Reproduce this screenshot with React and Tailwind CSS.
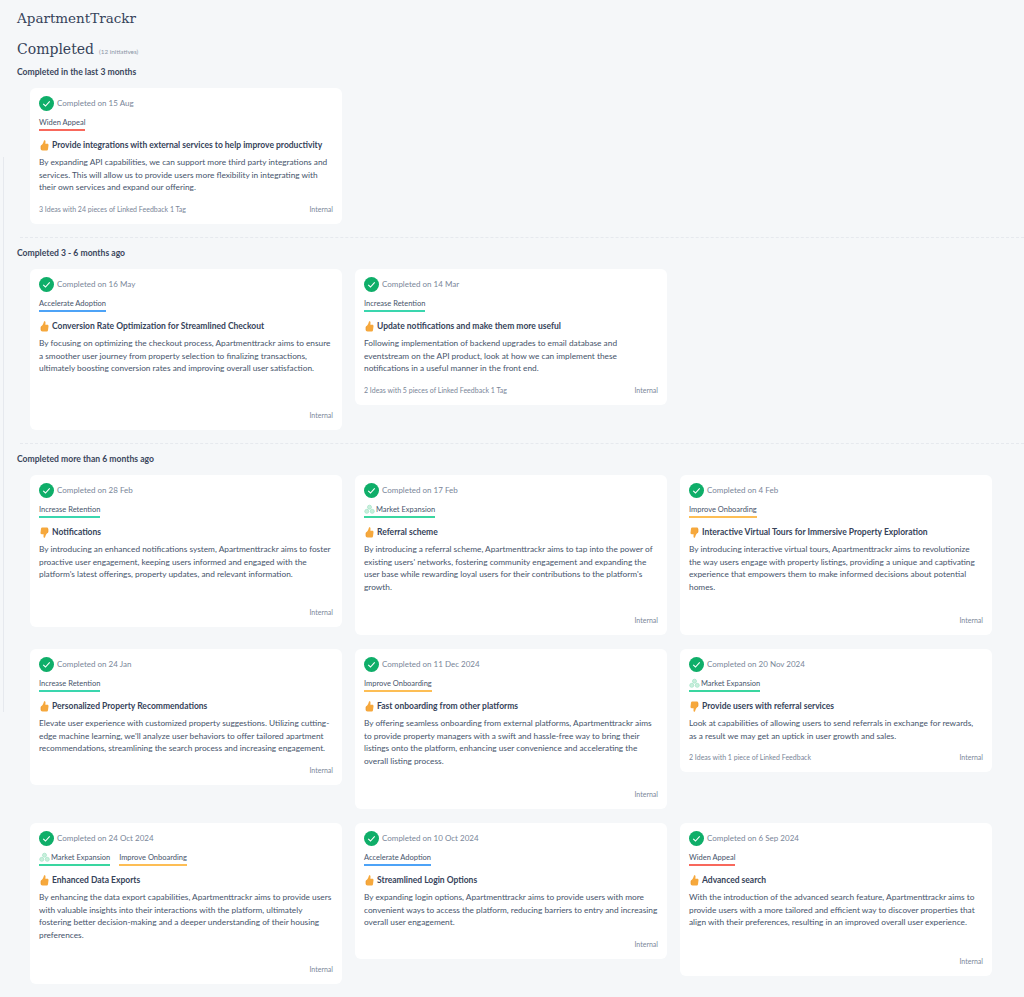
import React from 'react'

const LINE_COLORS = {
    'Widen Appeal': 'border-[#f8685c]',
    'Accelerate Adoption': 'border-[#4da3f7]',
    'Increase Retention': 'border-[#3ad6ae]',
    'Market Expansion': 'border-[#3ad6a0]',
    'Improve Onboarding': 'border-[#fdbe55]',
}

const CheckBadge = () => (
    <svg width="15" height="15" viewBox="0 0 15 15" className="shrink-0">
        <circle cx="7.5" cy="7.5" r="7.5" fill="#0fae69" />
        <path d="M4.2 7.8l2.3 2.2 4.2-4.6" fill="none" stroke="#fff" strokeWidth="1.1" />
    </svg>
)

const Clover = () => (
    <svg width="11" height="11" viewBox="0 0 12 11" className="shrink-0" fill="#c9efdc" stroke="#a5e3c8" strokeWidth=".8">
        <circle cx="6" cy="3" r="2.2" />
        <circle cx="3" cy="7.5" r="2.2" />
        <circle cx="9" cy="7.5" r="2.2" />
    </svg>
)

const Thumb = ({ down }) => (
    <svg width="9" height="11" viewBox="0 0 9 11" className={`shrink-0 ${down ? 'rotate-180' : ''}`}>
        <path d="M4 .4c.9-.3 1.5.3 1.5 1.2l-.1 2.2h1.9c.8 0 1.3.6 1.2 1.4l-.5 4c-.1.8-.7 1.3-1.5 1.3H2.6C1.5 10.500.8 9.800.8 8.800V6.300c0-.7.4-1.200 1-1.600C2.900 3.900 3.500 2.200 4 .4z" fill="#f6a83c" />
        <path d="M2.600 10.500C1.500 10.500.8 9.800.8 8.800V6.300c0-.5.2-.9.500-1.200v5.200z" fill="#e58f2a" />
    </svg>
)

const Tag = ({ name }) => (
    <div className={`box-content flex h-[13px] items-center gap-[1px] border-b-2 ${LINE_COLORS[name]}`}>
        {name === 'Market Expansion' && <Clover />}
        <span className="text-[7.5px] leading-[11px] text-[#46546b]">{name}</span>
    </div>
)

const Card = ({ item }) => (
    <div className={`flex flex-col rounded-md bg-white px-[9px] pt-[8px] pb-[10px] ${item.h}`}>
        <div className="flex items-center gap-[3px]">
            <CheckBadge />
            <span className="text-[8px] leading-[15px] text-[#7a8699]">Completed on {item.date}</span>
        </div>
        <div className="mt-[5px] flex gap-[9px]">
            {item.tags.map((t) => <Tag key={t} name={t} />)}
        </div>
        <div className="mt-[8px] flex items-center gap-[3px] pl-[1px]">
            <Thumb down={item.down} />
            <h3 className="text-[8.5px] font-bold leading-[12px] text-[#36435a]">{item.title}</h3>
        </div>
        <p className="mt-[5px] text-[8.3px] leading-[12.6px] text-[#46546b]">{item.text}</p>
        <div className="mt-auto flex justify-between text-[7px] leading-[10px] text-[#7a8699]">
            <span>{item.foot}</span>
            <span>Internal</span>
        </div>
    </div>
)

const Section = ({ title, children }) => (
    <div>
        <h2 className="text-[8.6px] font-bold leading-[13px] text-[#3a465c]">{title}</h2>
        {children}
    </div>
)

const recent = [
    {
        date: '15 Aug', tags: ['Widen Appeal'], h: 'h-[136px]',
        title: 'Provide integrations with external services to help improve productivity',
        text: 'By expanding API capabilities, we can support more third party integrations and services. This will allow us to provide users more flexibility in integrating with their own services and expand our offering.',
        foot: '3 Ideas with 24 pieces of Linked Feedback 1 Tag',
    },
]

const mid = [
    {
        date: '16 May', tags: ['Accelerate Adoption'], h: 'h-[161px]',
        title: 'Conversion Rate Optimization for Streamlined Checkout',
        text: 'By focusing on optimizing the checkout process, Apartmenttrackr aims to ensure a smoother user journey from property selection to finalizing transactions, ultimately boosting conversion rates and improving overall user satisfaction.',
    },
    {
        date: '14 Mar', tags: ['Increase Retention'], h: 'h-[136px]',
        title: 'Update notifications and make them more useful',
        text: 'Following implementation of backend upgrades to email database and eventstream on the API product, look at how we can implement these notifications in a useful manner in the front end.',
        foot: '2 Ideas with 5 pieces of Linked Feedback 1 Tag',
    },
]

const older = [
    {
        date: '28 Feb', tags: ['Increase Retention'], h: 'h-[152px]', down: true,
        title: 'Notifications',
        text: "By introducing an enhanced notifications system, Apartmenttrackr aims to foster proactive user engagement, keeping users informed and engaged with the platform's latest offerings, property updates, and relevant information.",
    },
    {
        date: '17 Feb', tags: ['Market Expansion'], h: 'h-[160px]',
        title: 'Referral scheme',
        text: "By introducing a referral scheme, Apartmenttrackr aims to tap into the power of existing users' networks, fostering community engagement and expanding the user base while rewarding loyal users for their contributions to the platform's growth.",
    },
    {
        date: '4 Feb', tags: ['Improve Onboarding'], h: 'h-[160px]', down: true,
        title: 'Interactive Virtual Tours for Immersive Property Exploration',
        text: 'By introducing interactive virtual tours, Apartmenttrackr aims to revolutionize the way users engage with property listings, providing a unique and captivating experience that empowers them to make informed decisions about potential homes.',
    },
    {
        date: '24 Jan', tags: ['Increase Retention'], h: 'h-[136px]',
        title: 'Personalized Property Recommendations',
        text: "Elevate user experience with customized property suggestions. Utilizing cutting-edge machine learning, we'll analyze user behaviors to offer tailored apartment recommendations, streamlining the search process and increasing engagement.",
    },
    {
        date: '11 Dec 2024', tags: ['Improve Onboarding'], h: 'h-[160px]',
        title: 'Fast onboarding from other platforms',
        text: 'By offering seamless onboarding from external platforms, Apartmenttrackr aims to provide property managers with a swift and hassle-free way to bring their listings onto the platform, enhancing user convenience and accelerating the overall listing process.',
    },
    {
        date: '20 Nov 2024', tags: ['Market Expansion'], h: 'h-[123px]', down: true,
        title: 'Provide users with referral services',
        text: 'Look at capabilities of allowing users to send referrals in exchange for rewards, as a result we may get an uptick in user growth and sales.',
        foot: '2 Ideas with 1 piece of Linked Feedback',
    },
    {
        date: '24 Oct 2024', tags: ['Market Expansion', 'Improve Onboarding'], h: 'h-[161px]',
        title: 'Enhanced Data Exports',
        text: 'By enhancing the data export capabilities, Apartmenttrackr aims to provide users with valuable insights into their interactions with the platform, ultimately fostering better decision-making and a deeper understanding of their housing preferences.',
    },
    {
        date: '10 Oct 2024', tags: ['Accelerate Adoption'], h: 'h-[136px]',
        title: 'Streamlined Login Options',
        text: 'By expanding login options, Apartmenttrackr aims to provide users with more convenient ways to access the platform, reducing barriers to entry and increasing overall user engagement.',
    },
    {
        date: '6 Sep 2024', tags: ['Widen Appeal'], h: 'h-[153px]',
        title: 'Advanced search',
        text: 'With the introduction of the advanced search feature, Apartmenttrackr aims to provide users with a more tailored and efficient way to discover properties that align with their preferences, resulting in an improved overall user experience.',
    },
]

const CardGrid = ({ items }) => (
    <div className="mt-[9px] ml-[13px] grid grid-cols-[312px_312px_312px] items-start gap-x-[13px] gap-y-[14px]">
        {items.map((item) => <Card key={item.date} item={item} />)}
    </div>
)

const Divider = () => <div className="mt-[13px] mb-[9px] ml-[3px] border-t border-dashed border-[#e6e9ee]" />

export default function App() {
    return (
        <div className="relative min-h-[997px] overflow-hidden bg-[#f5f7f9] pl-[17px] pt-[8px] font-['Lato',sans-serif]">
            <div className="absolute left-[3px] top-[157px] h-[555px] w-px bg-[#e6e9ee]" />
            <h1 className="font-['DejaVu_Serif',serif] text-[13.5px] leading-[20px] text-[#36435a]">ApartmentTrackr</h1>
            <div className="mt-[11px] flex items-baseline gap-[5px]">
                <span className="font-['DejaVu_Serif',serif] text-[14px] leading-[20px] text-[#36435a]">Completed</span>
                <span className="text-[6.4px] text-[#8a95a6]">(12 initiatives)</span>
            </div>
            <div className="mt-[7px]">
                <Section title="Completed in the last 3 months">
                    <CardGrid items={recent} />
                </Section>
            </div>
            <Divider />
            <Section title="Completed 3 - 6 months ago">
                <CardGrid items={mid} />
            </Section>
            <Divider />
            <Section title="Completed more than 6 months ago">
                <CardGrid items={older} />
            </Section>
        </div>
    )
}
